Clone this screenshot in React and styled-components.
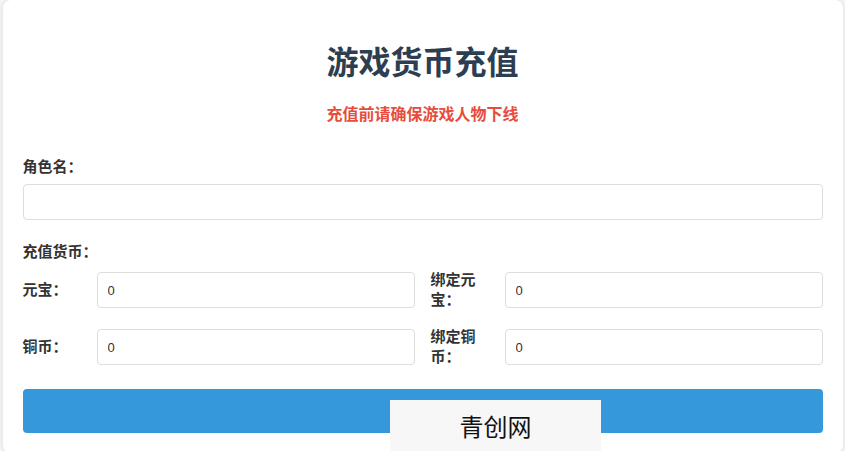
import React from 'react';
import styled, { createGlobalStyle } from 'styled-components';

const GlobalStyle = createGlobalStyle`
    body {
        margin: 0;
        background-color: #f7f7f7;
        font-family: "Liberation Sans", "Noto Sans CJK SC", sans-serif;
        overflow: hidden;
    }
    * {
        box-sizing: border-box;
    }
`

const Card = styled.div`
    max-width: 840px;
    margin: 0 auto;
    padding: 20px;
    background-color: #fff;
    border-radius: 8px;
    box-shadow: 0 0 6px rgba(0, 0, 0, 0.12);
`

const Title = styled.h1`
    margin: 24px 0 0;
    font-size: 32px;
    line-height: 38px;
    font-weight: 700;
    text-align: center;
    color: #2c3e50;
`

const Notice = styled.p`
    margin: 21px 0 0;
    font-size: 16px;
    line-height: 24px;
    font-weight: 700;
    text-align: center;
    color: #e74c3c;
`

const Label = styled.label`
    display: block;
    margin: ${(props) => props.$top || 21}px 0 6px;
    font-size: 15px;
    line-height: 22px;
    font-weight: 700;
    color: #333;
`

const TextInput = styled.input`
    display: block;
    width: 100%;
    height: 36px;
    padding: 0 10px;
    border: 1px solid #ddd;
    border-radius: 4px;
    font-family: "Liberation Sans", sans-serif;
    font-size: 13px;
    color: #333;
    background-color: #fff;
    outline: none;
`

const Grid = styled.div`
    display: grid;
    grid-template-columns: 1fr 1fr;
    column-gap: 16px;
    row-gap: 17px;
    margin-top: 7px;
`

const Field = styled.div`
    display: flex;
    align-items: center;
    gap: 14px;
`

const FieldLabel = styled.span`
    flex: 0 0 60px;
    font-size: 15px;
    line-height: 20px;
    font-weight: 700;
    color: #333;
`

const SubmitButton = styled.button`
    display: block;
    width: 100%;
    height: 44px;
    margin-top: 22px;
    border: none;
    border-radius: 4px;
    background-color: #3498db;
    color: #fff;
    font-size: 16px;
    cursor: pointer;
`

const Watermark = styled.div`
    position: fixed;
    left: 390px;
    top: 400px;
    width: 211px;
    height: 60px;
    background-color: #f7f7f7;
    text-align: center;
    padding-top: 9px;
    font-family: "Noto Sans CJK SC", sans-serif;
    font-size: 24px;
    line-height: 34px;
    color: #111;
`

const fields = [
    { label: '元宝：' },
    { label: '绑定元宝：' },
    { label: '铜币：' },
    { label: '绑定铜币：' },
]

const App = () => {
    return (
        <>
            <GlobalStyle />
            <Card>
                <Title>游戏货币充值</Title>
                <Notice>充值前请确保游戏人物下线</Notice>
                <Label $top={29}>角色名：</Label>
                <TextInput type='text' />
                <Label>充值货币：</Label>
                <Grid>
                    {fields.map((f) => (
                        <Field key={f.label}>
                            <FieldLabel>{f.label}</FieldLabel>
                            <TextInput type='number' defaultValue='0' />
                        </Field>
                    ))}
                </Grid>
                <SubmitButton></SubmitButton>
            </Card>
            <Watermark>青创网</Watermark>
        </>
    )
}

export default App;
